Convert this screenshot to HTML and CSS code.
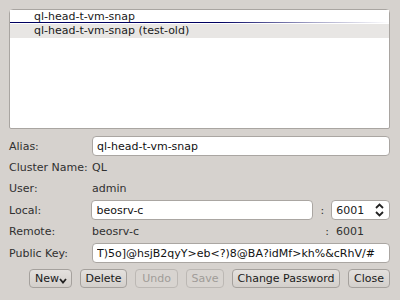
FILE: index.html
```html
<!DOCTYPE html>
<html lang="en">
<head>
  <meta charset="UTF-8" />
  <title>Clusters</title>
  <link rel="stylesheet" href="styles.css">
</head>
<body>
  <div class="dialog">
    <div class="cluster-list">
      <div class="row selected">ql-head-t-vm-snap</div>
      <div class="row alt">ql-head-t-vm-snap (test-old)</div>
    </div>

    <div class="form">
      <div class="field">
        <span class="label">Alias:</span>
        <input class="entry" type="text" value="ql-head-t-vm-snap">
      </div>
      <div class="field plain">
        <span class="label">Cluster Name:</span>
        <span class="value">QL</span>
      </div>
      <div class="field plain">
        <span class="label">User:</span>
        <span class="value">admin</span>
      </div>
      <div class="field">
        <span class="label">Local:</span>
        <input class="entry host" type="text" value="beosrv-c">
        <span class="colon">:</span>
        <div class="spin">
          <span>6001</span>
          <svg width="9" height="14" viewBox="0 0 9 14">
            <path d="M1 5 L4.5 1.5 L8 5" fill="none" stroke="#222" stroke-width="1.8"/>
            <path d="M1 9 L4.5 12.5 L8 9" fill="none" stroke="#222" stroke-width="1.8"/>
          </svg>
        </div>
      </div>
      <div class="field plain">
        <span class="label">Remote:</span>
        <span class="value host-text">beosrv-c</span>
        <span class="colon">:</span>
        <span class="value">6001</span>
      </div>
      <div class="field">
        <span class="label">Public Key:</span>
        <input class="entry" type="text" value="T)5o]@hsjB2qyY&gt;eb&lt;?)8@BA?idMf&gt;kh%&amp;cRhV/#">
      </div>
    </div>

    <div class="buttons">
      <button class="btn new">New<svg width="8" height="6" viewBox="0 0 8 6"><path d="M1 1 L4 4.5 L7 1" fill="none" stroke="#222" stroke-width="1.8"/></svg></button>
      <button class="btn w-delete">Delete</button>
      <button class="btn w-undo" disabled>Undo</button>
      <button class="btn w-save" disabled>Save</button>
      <button class="btn w-pass">Change Password</button>
      <button class="btn w-close">Close</button>
    </div>
  </div>
</body>
</html>
```

FILE: styles.css
```css
body {
  margin: 0;
  background: #d6d2ce;
  font-family: 'DejaVu Sans', sans-serif;
  font-size: 11px;
  color: #1a1a1a;
}
.dialog {
  padding: 9px 10px 0 9px;
}
.cluster-list {
  box-sizing: border-box;
  height: 120px;
  background: white;
  border: 1px solid #a9a5a1;
  border-radius: 4px 4px 2px 2px;
}
.row {
  padding-left: 24px;
  white-space: nowrap;
}
.row.selected {
  height: 12px;
  line-height: 13px;
  background: white;
  border-bottom: 1px solid;
  border-image: linear-gradient(to right, #000060, #000060 55%, rgba(0,0,96,0.35) 80%, rgba(0,0,96,0)) 1;
}
.row.alt {
  margin-top: 1px;
  background: #e8e6e4;
  height: 14px;
  line-height: 14px;
}
.form {
  margin-top: 7px;
}
.field {
  display: flex;
  align-items: center;
  height: 20px;
  margin-bottom: 2px;
}
.field.plain {
  height: 19px;
}
.label {
  width: 83px;
  color: #303030;
}
.value {
  color: #303030;
}
.host-text {
  width: 226px;
}
.entry {
  flex: 1;
  box-sizing: border-box;
  height: 20px;
  margin: 0;
  border: 1px solid #aaa6a2;
  border-radius: 4px;
  background: white;
  font-family: 'DejaVu Sans', sans-serif;
  font-size: 11px;
  padding: 0 4px;
  color: #111;
  outline: none;
}
.entry.host {
  flex: none;
  width: 222px;
}
.colon {
  width: 18px;
  text-align: center;
  color: #303030;
}
.spin {
  box-sizing: border-box;
  width: 59px;
  height: 20px;
  border: 1px solid #aaa6a2;
  border-radius: 4px;
  background: white;
  display: flex;
  align-items: center;
  justify-content: space-between;
  padding: 0 5px 0 4px;
}
.buttons {
  display: flex;
  justify-content: flex-end;
  gap: 8px;
  margin-top: 6px;
}
.btn {
  box-sizing: border-box;
  height: 19px;
  padding: 0;
  border: 1px solid #a5a19d;
  border-radius: 4px;
  background: linear-gradient(#e4e1de, #d3cfcb);
  font-family: 'DejaVu Sans', sans-serif;
  font-size: 11px;
  color: #1a1a1a;
  white-space: nowrap;
}
.btn:disabled {
  color: #a09c98;
  border-color: #bcb8b4;
  background: #d8d4d0;
}
.btn.new {
  width: 43px;
  display: flex;
  align-items: center;
  justify-content: flex-end;
  padding: 0 4px 0 0;
}
.btn.new svg {
  margin-top: 5px;
}
.w-delete { width: 47px; }
.w-undo { width: 43px; }
.w-save { width: 38px; }
.w-pass { width: 108px; }
.w-close { width: 42px; }
```
